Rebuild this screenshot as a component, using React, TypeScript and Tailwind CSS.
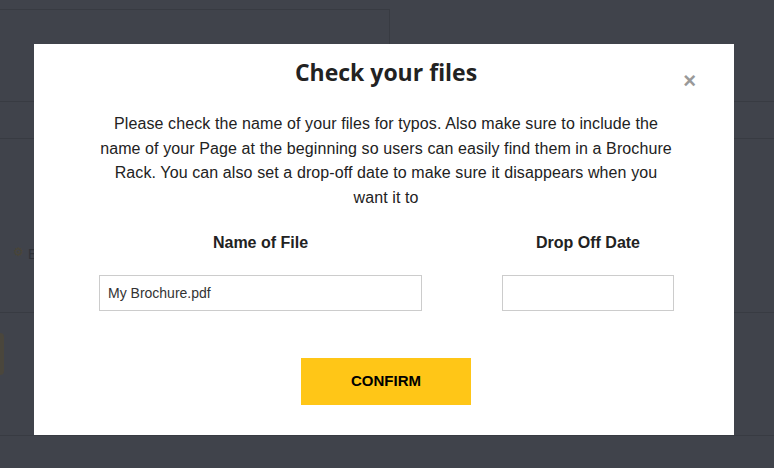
import React from 'react'

export default function App() {
  const [fileName, setFileName] = React.useState<string>("My Brochure.pdf")
  const [dropDate, setDropDate] = React.useState<string>("")

  return (
    <div className="relative w-[774px] h-[468px] overflow-hidden bg-[#40434b]" style={{ fontFamily: '"Liberation Sans", Arial, sans-serif' }}>
      {/* dimmed page behind the modal */}
      <div className="flex flex-col h-full">
        <div className="h-[9px]" />
        <div className="flex">
          <div className="w-[390px] h-[92px] border-t border-r border-[#383b42]" />
          <div className="flex-1" />
        </div>
        <div className="h-[38px] border-t border-b border-[#383b42]" />
        <div className="flex items-start h-[173px] pt-[105px] pl-[13px] gap-1 text-[#2f3238] text-sm leading-[20px]">
          <span className="text-[#4a4536] text-xs">⚙</span>
          <span>E</span>
        </div>
        <div className="border-t border-[#383b42] pt-[20px]">
          <div className="w-[4px] h-[42px] bg-[#4a463c] rounded-r" />
        </div>
        <div className="flex-1" />
        <div className="h-[33px] border-t border-[#383b42]" />
      </div>

      {/* modal */}
      <div className="absolute left-[34px] top-[44px] w-[700px] h-[391px] bg-white">
        <button className="absolute right-[38px] top-[26px] text-[#999] text-[22px] font-bold leading-none">×</button>
        <div className="flex flex-col items-center pt-[14px] pl-[4px]">
          <h2 className="text-[23px] font-bold text-[#222] leading-[28px]" style={{ fontFamily: '"Open Sans", sans-serif' }}>Check your files</h2>
          <p className="mt-[26px] w-[600px] text-center text-[16px] leading-[24.7px] text-[#222] tracking-[0.1px]">
            Please check the name of your files for typos. Also make sure to include the<br />
            name of your Page at the beginning so users can easily find them in a Brochure<br />
            Rack. You can also set a drop-off date to make sure it disappears when you<br />
            want it to
          </p>
          <div className="flex mt-[22px] w-full pl-[61px]">
            <div className="flex flex-col items-center w-[323px]">
              <label className="text-[16px] font-bold text-[#222] leading-[20px]">Name of File</label>
              <input
                className="mt-[22px] w-[323px] h-[36px] border border-[#cccccc] px-[8px] text-[14px] text-[#333] outline-none"
                value={fileName}
                onInput={(e) => setFileName((e.target as HTMLInputElement).value)}
              />
            </div>
            <div className="flex flex-col items-center w-[172px] ml-[80px]">
              <label className="text-[16px] font-bold text-[#222] leading-[20px] whitespace-nowrap">Drop Off Date</label>
              <input
                className="mt-[22px] w-[172px] h-[36px] border border-[#cccccc] px-[8px] text-[14px] text-[#333] outline-none"
                value={dropDate}
                onInput={(e) => setDropDate((e.target as HTMLInputElement).value)}
              />
            </div>
          </div>
          <button className="mt-[47px] w-[170px] h-[47px] bg-[#ffc617] text-[15px] font-bold text-black">CONFIRM</button>
        </div>
      </div>
    </div>
  )
}
